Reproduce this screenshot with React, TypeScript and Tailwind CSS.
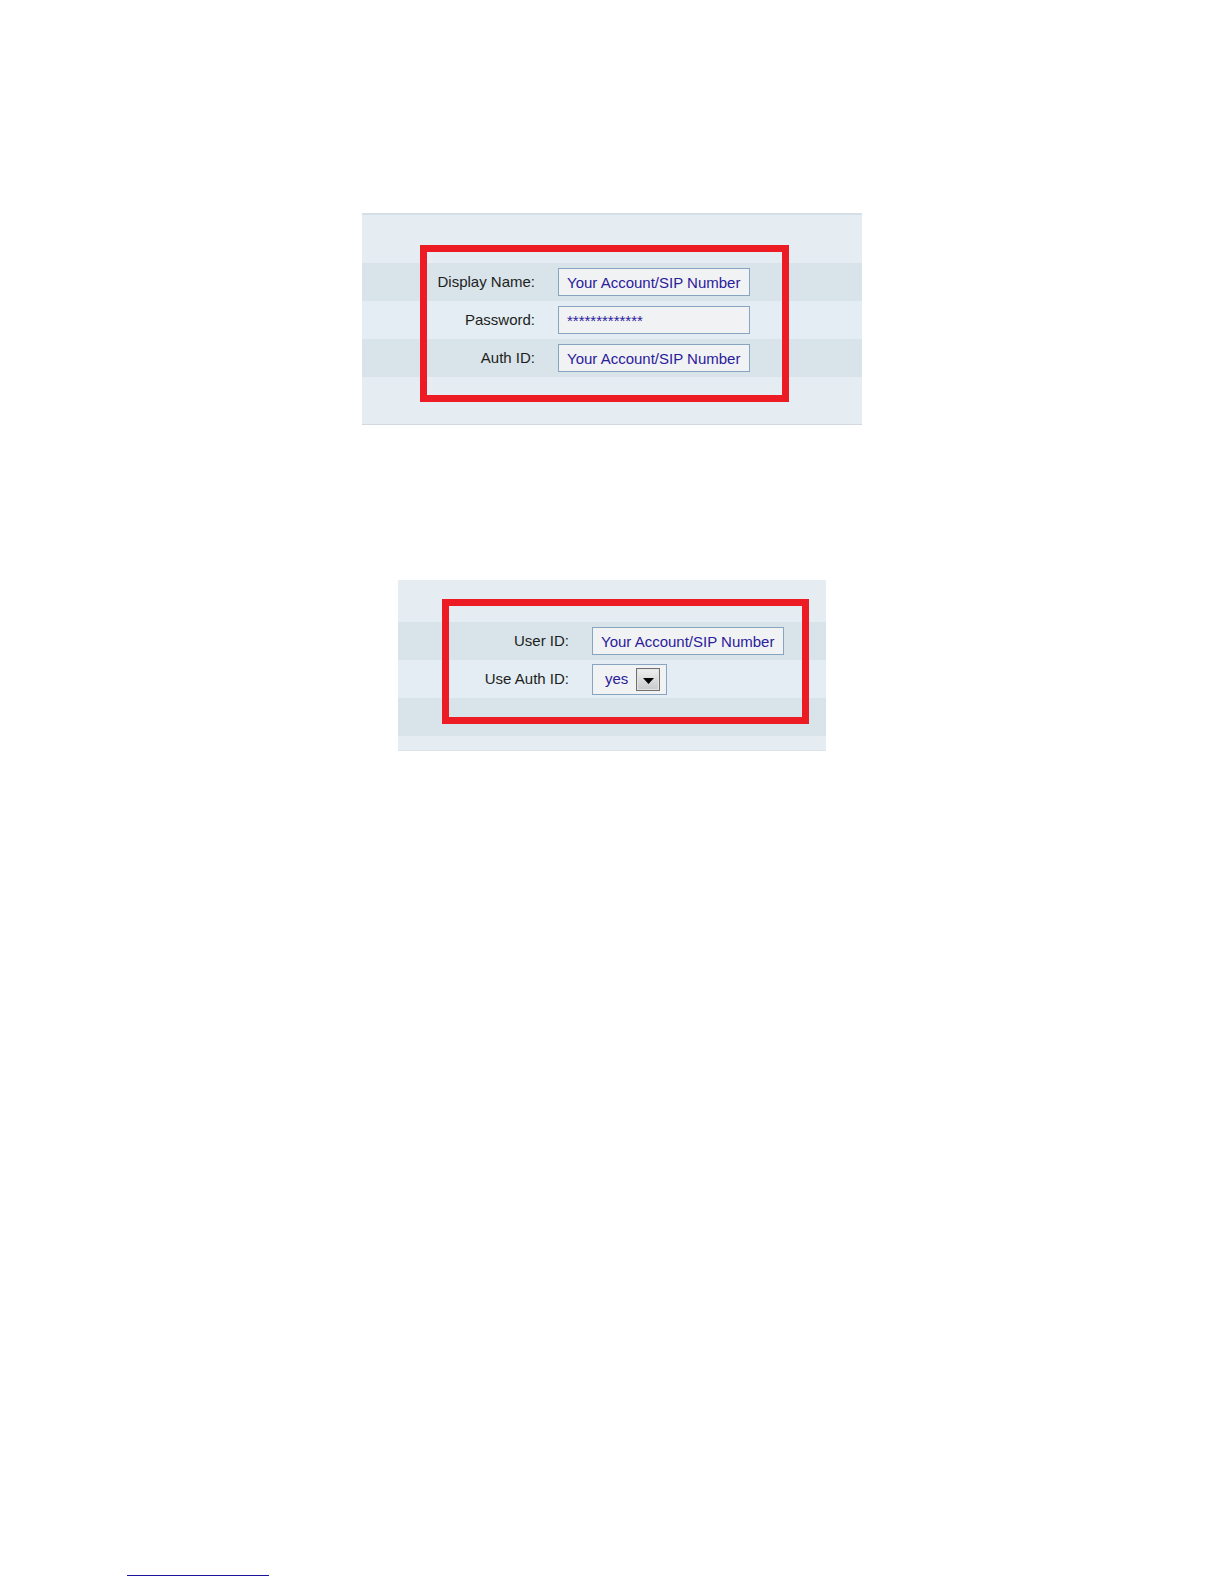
import type { ReactNode } from 'react';

const inputClass =
  'h-7 w-48 rounded-none border border-[#87a4c0] bg-[#f1f2f4] px-2 text-[15px] leading-5 text-[#2a209a] outline-none';

type RowProps = { id: string; label: string; shaded?: boolean; labelWidth: string; children: ReactNode };

function Row({ id, label, shaded, labelWidth, children }: RowProps) {
  return (
    <div className={`flex h-[38px] items-center gap-[23px] ${shaded ? 'bg-[#d8e3ea]' : 'bg-[#e4edf4]'}`}>
      <label htmlFor={id} className={`${labelWidth} shrink-0 text-right text-[15px] leading-5 text-[#1c1e20]`}>
        {label}
      </label>
      {children}
    </div>
  );
}

export default function App() {
  return (
    <main className="flex min-h-screen flex-col items-center bg-white pt-[213px] font-['Liberation_Sans',Arial,sans-serif]">
      <section className="relative w-full max-w-[500px] border-t-2 border-b border-t-[#d5dfe7] border-b-[#d3d9de] bg-[#e5ecf2] pt-12 pb-[47px]">
        <Row id="display-name" label="Display Name:" labelWidth="w-[173px]" shaded>
          <input id="display-name" className={inputClass} defaultValue="Your Account/SIP Number" />
        </Row>
        <Row id="password" label="Password:" labelWidth="w-[173px]">
          <input id="password" className={inputClass} defaultValue="*************" />
        </Row>
        <Row id="auth-id" label="Auth ID:" labelWidth="w-[173px]" shaded>
          <input id="auth-id" className={inputClass} defaultValue="Your Account/SIP Number" />
        </Row>
        <div className="pointer-events-none absolute top-[30px] right-[73px] bottom-[22px] left-[58px] border-[7px] border-[#ed1c24]" />
      </section>

      <section className="relative mt-[155px] w-full max-w-[428px] border-b border-[#dce3e9] bg-[#e5ecf2] pt-[42px] pb-3.5">
        <Row id="user-id" label="User ID:" labelWidth="w-[171px]" shaded>
          <input id="user-id" className={inputClass} defaultValue="Your Account/SIP Number" />
        </Row>
        <Row id="use-auth-id" label="Use Auth ID:" labelWidth="w-[171px]">
          <div className="relative h-[31px] w-[75px]">
            <select
              id="use-auth-id"
              defaultValue="yes"
              className="size-full appearance-none rounded-none border border-[#87a4c0] bg-[#f1f2f4] pl-3 text-[15px] leading-5 text-[#2a209a] outline-none"
            >
              <option>yes</option>
              <option>no</option>
            </select>
            <span className="pointer-events-none absolute top-1 right-[7px] flex h-[23px] w-6 items-center justify-center border border-[#707070] bg-linear-to-b from-[#efefef] to-[#c9cacb] pt-1 shadow-[inset_0_0_0_1px_#e4e4e4]">
              <svg viewBox="0 0 11 6" className="h-[6px] w-[11px]" aria-hidden="true">
                <path d="M0 0h11L5.5 6z" fill="#050505" />
              </svg>
            </span>
          </div>
        </Row>
        <div className="h-[38px] bg-[#d8e3ea]" />
        <div className="pointer-events-none absolute top-[19px] right-[17px] bottom-[26px] left-11 border-[7px] border-[#ed1c24]" />
      </section>

      <footer className="mt-auto w-full pb-2 pl-[127px]">
        <hr className="h-px w-[142px] border-0 bg-[#1a149c]" />
      </footer>
    </main>
  );
}
